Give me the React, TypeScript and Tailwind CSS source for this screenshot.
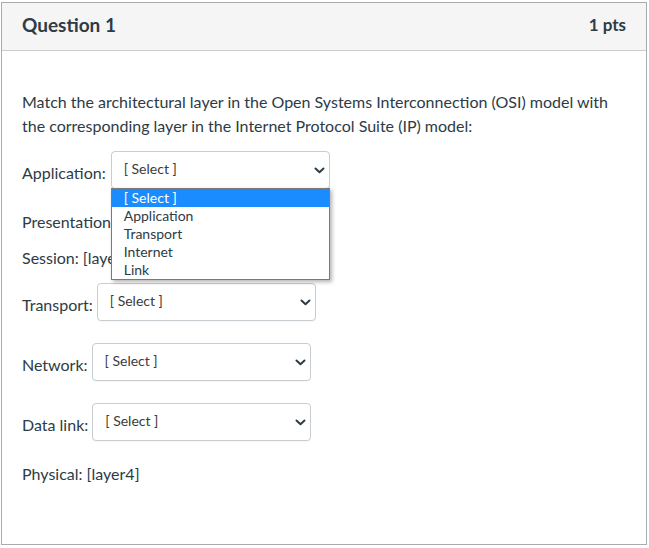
import React from 'react'

const options = ['[ Select ]', 'Application', 'Transport', 'Internet', 'Link']

function Chevron() {
    return (
        <svg width="11" height="7" viewBox="0 0 11 7" className="shrink-0">
            <path d="M1.5 1.5 L5.5 5.2 L9.5 1.5" fill="none" stroke="#2d3b45" strokeWidth="2" strokeLinecap="round" strokeLinejoin="round" />
        </svg>
    )
}

function FakeSelect({ open = false }: { open?: boolean }) {
    return (
        <div className="relative">
            <div className="flex h-[38px] w-[219px] items-start justify-between rounded-[4px] border border-[#c7cdd1] bg-white pl-[12px] pr-[4px] shadow-[0_1px_1px_rgba(0,0,0,0.04)]">
                <span className="pt-[7px] text-[14px] leading-[20px] text-[#3b3b3b]">[ Select ]</span>
                <span className="pt-[15px]"><Chevron /></span>
            </div>
            {open && (
                <ul className="absolute left-0 top-[37px] z-10 w-[219px] border border-[#7a7a7a] bg-white shadow-[2px_2px_4px_rgba(0,0,0,0.3)]">
                    {options.map((opt, i) => (
                        <li
                            key={opt}
                            className={
                                i === 0
                                    ? 'h-[18px] bg-[#1a8cff] pl-[12px] text-[14px] leading-[18px] text-white'
                                    : 'h-[18px] pl-[12px] text-[14px] leading-[18px] text-[#2d3b45]'
                            }
                        >
                            {opt}
                        </li>
                    ))}
                </ul>
            )}
        </div>
    )
}

function SelectRow({ label, gap, open, className }: { label: string; gap: string; open?: boolean; className: string }) {
    return (
        <div className={`flex items-start ${className}`}>
            <span className={`pt-[10px] leading-[24px] ${gap}`}>{label}</span>
            <FakeSelect open={open} />
        </div>
    )
}

export default function App() {
    return (
        <div className="h-[548px] w-[649px] bg-white pl-[1px] pt-[2px] font-['Lato','Noto_Sans',sans-serif] text-[16px] text-[#2d3b45]">
            <div className="h-[543px] w-[646px] border border-[#a9acae]">
                <div className="flex h-[48px] items-center justify-between border-b border-[#c7cdd1] bg-[#f5f5f5] px-[20px]">
                    <h2 className="-mt-[4px] text-[19px] font-bold leading-[24px]">Question 1</h2>
                    <span className="-mt-[4px] text-[17px] font-bold leading-[24px]">1 pts</span>
                </div>

                <div className="px-[20px] pt-[39px]">
                    <p className="leading-[24px]">
                        Match the architectural layer in the Open Systems Interconnection (OSI) model with the corresponding layer in the Internet Protocol Suite (IP) model:
                    </p>

                    <SelectRow label="Application:" gap="mr-[5px]" open className="mt-[13px]" />

                    <p className="mt-[21px] leading-[24px]">Presentation: [layer2]</p>
                    <p className="mt-[12px] leading-[24px]">Session: [layer3]</p>

                    <SelectRow label="Transport:" gap="mr-[4px]" className="mt-[13px]" />
                    <SelectRow label="Network:" gap="mr-[4px]" className="mt-[22px]" />
                    <SelectRow label="Data link:" gap="mr-[4px]" className="mt-[22px]" />

                    <p className="mt-[21px] leading-[24px]">Physical: [layer4]</p>
                </div>
            </div>
        </div>
    )
}
